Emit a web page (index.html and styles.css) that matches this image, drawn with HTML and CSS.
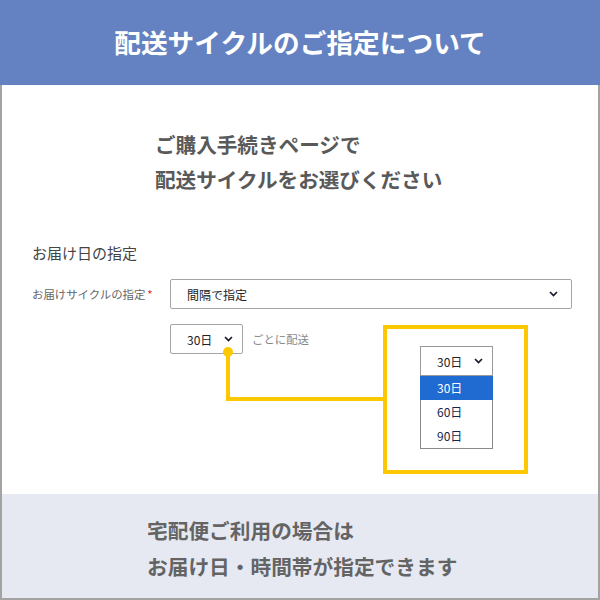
FILE: index.html
```html
<!DOCTYPE html>
<html lang="ja">
<head>
    <meta charset="UTF-8">
    <meta name="viewport" content="width=device-width, initial-scale=1.0">
    <title>配送サイクルのご指定について</title>
    <link rel="stylesheet" href="styles.css">
</head>
<body>
    <div class="frame">
        <header class="banner">
            <h1>配送サイクルのご指定について</h1>
        </header>

        <main class="panel">
            <div class="lead">
                <p>ご購入手続きページで</p>
                <p>配送サイクルをお選びください</p>
            </div>

            <section class="form">
                <h2>お届け日の指定</h2>
                <div class="row">
                    <label class="label">お届けサイクルの指定<span class="req">*</span></label>
                    <div class="select wide">
                        <span>間隔で指定</span>
                        <svg class="chev" width="9" height="6" viewBox="0 0 9 6"><polyline points="1,1 4.5,4.5 8,1" /></svg>
                    </div>
                </div>
                <div class="row cycle">
                    <div class="select small">
                        <span>30日</span>
                        <svg class="chev" width="9" height="6" viewBox="0 0 9 6"><polyline points="1,1 4.5,4.5 8,1" /></svg>
                    </div>
                    <span class="suffix">ごとに配送</span>
                </div>
            </section>

            <!-- zoomed callout of the open dropdown -->
            <span class="dot"></span>
            <span class="connector"></span>
            <div class="callout">
                <div class="select small demo">
                    <span>30日</span>
                    <svg class="chev" width="9" height="6" viewBox="0 0 9 6"><polyline points="1,1 4.5,4.5 8,1" /></svg>
                </div>
                <ul class="options">
                    <li class="active">30日</li>
                    <li>60日</li>
                    <li>90日</li>
                </ul>
            </div>
        </main>

        <footer class="note">
            <p>宅配便ご利用の場合は</p>
            <p>お届け日・時間帯が指定できます</p>
        </footer>
    </div>
</body>
</html>
```

FILE: styles.css
```css
body {
    margin: 0;
    font-family: "Noto Sans CJK JP", "Noto Sans", sans-serif;
    background-color: #ffffff;
}
p, h1, h2, ul {
    margin: 0;
    padding: 0;
}
.frame {
    width: 600px;
    height: 600px;
    display: flex;
    flex-direction: column;
}
.banner {
    height: 85px;
    background-color: #6482c1;
    display: flex;
    align-items: center;
    justify-content: center;
}
.banner h1 {
    color: #ffffff;
    font-size: 26.7px;
    font-weight: 700;
    line-height: 1;
    margin-top: -1px;
}
.panel {
    position: relative;
    height: 409px;
    box-sizing: border-box;
    border-left: 2px solid #a3a3a3;
    border-right: 2px solid #a3a3a3;
    padding: 42px 0 0 0;
}
.lead {
    padding-left: 153px;
    color: #595959;
    font-size: 20.6px;
    font-weight: 700;
    line-height: 35px;
}
.form {
    padding: 46px 0 0 30px;
}
.form h2 {
    font-size: 15px;
    font-weight: 400;
    color: #444444;
    line-height: 20px;
}
.row {
    display: flex;
    align-items: center;
    margin-top: 16px;
}
.row.cycle {
    margin-top: 15px;
    padding-left: 138px;
}
.label {
    width: 138px;
    font-size: 11.4px;
    color: #666666;
}
.req {
    color: #e0312b;
    margin-left: 2px;
}
.select {
    display: flex;
    align-items: center;
    justify-content: space-between;
    box-sizing: border-box;
    border: 1px solid #a5a5a5;
    border-radius: 2px;
    background-color: #ffffff;
    font-size: 12px;
    color: #222222;
    padding: 0 13px 0 16px;
}
.select.wide {
    width: 402px;
    height: 30px;
}
.select.small {
    width: 73px;
    height: 30px;
    padding-right: 9px;
}
.chev polyline {
    fill: none;
    stroke: #1a1a2e;
    stroke-width: 1.7;
}
.suffix {
    margin-left: 9px;
    font-size: 11.4px;
    color: #888888;
}
.dot {
    position: absolute;
    left: 221px;
    top: 262px;
    width: 10px;
    height: 10px;
    border-radius: 50%;
    background-color: #fdc800;
    z-index: 2;
}
.connector {
    position: absolute;
    left: 224px;
    top: 267px;
    width: 160px;
    height: 49px;
    box-sizing: border-box;
    border-left: 4px solid #fdc800;
    border-bottom: 4px solid #fdc800;
}
.callout {
    position: absolute;
    left: 381px;
    top: 240px;
    width: 145px;
    height: 149px;
    box-sizing: border-box;
    border: 4px solid #fdc800;
    padding: 17px 0 0 33px;
}
.select.demo {
    width: 73px;
    border-radius: 0;
    border-color: #999999;
}
.options {
    list-style: none;
    width: 73px;
    box-sizing: border-box;
    border: 1px solid #8a8a8a;
    border-top: none;
    background-color: #ffffff;
}
.options li {
    height: 24px;
    line-height: 24px;
    padding-left: 16px;
    font-size: 12px;
    color: #14284b;
}
.options li.active {
    background-color: #1f6bd2;
    color: #ffffff;
    margin: 0 -1px;
    padding-left: 17px;
}
.note {
    flex: 1;
    box-sizing: border-box;
    background-color: #e6e9f2;
    border-left: 2px solid #a3a3a3;
    border-right: 2px solid #a3a3a3;
    border-bottom: 2px solid #a3a3a3;
    padding: 18px 0 0 145px;
    color: #646464;
    font-size: 20.7px;
    font-weight: 700;
    line-height: 36px;
}
```
